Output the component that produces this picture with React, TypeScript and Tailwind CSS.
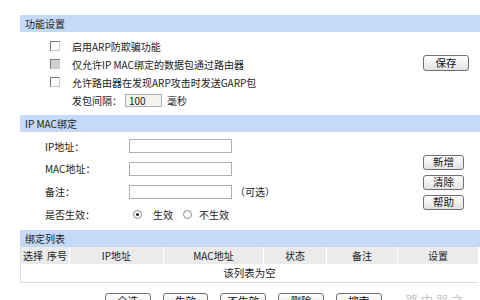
import React from 'react';

const font = "font-['SimSun','Noto_Sans_CJK_SC',sans-serif]";

const Btn = ({ label, w = 'w-[46px]', h = 'h-[16px]' }: { label: string; w?: string; h?: string }) => (
  <div
    className={`${w} ${h} flex items-center justify-center rounded-[3px] border border-[#707070] bg-linear-to-b from-white to-[#e2e2e2] text-[10.5px] leading-none text-[#111]`}
  >
    {label}
  </div>
);

const Check = ({ disabled = false }: { disabled?: boolean }) => (
  <span
    className={`block w-[10px] h-[10px] border border-t-[#7a7a7a] border-l-[#7a7a7a] border-b-[#c9c9c9] border-r-[#c9c9c9] ${disabled ? 'bg-[#cfcfcf]' : 'bg-white'}`}
  />
);

const Radio = ({ checked = false }: { checked?: boolean }) => (
  <span className="flex w-[9px] h-[9px] items-center justify-center rounded-full border border-[#8a8a8a] bg-white">
    {checked && <span className="block w-[3px] h-[3px] rounded-full bg-[#222]" />}
  </span>
);

const Bar = ({ title }: { title: string }) => (
  <div className="h-[17px] bg-[#c5daf8] pl-[5px] flex items-center leading-none text-[#222]">{title}</div>
);

const TextBox = () => <div className="w-[103px] h-[14px] border border-[#a9b0b8] bg-white" />;

export default function App() {
  const cols = [
    { label: '选择', w: 'w-[24px]' },
    { label: '序号', w: 'w-[24px]' },
    { label: 'IP地址', w: 'w-[94px]' },
    { label: 'MAC地址', w: 'w-[100px]' },
    { label: '状态', w: 'w-[63px]' },
    { label: '备注', w: 'w-[71px]' },
    { label: '设置', w: 'flex-1' },
  ];

  return (
    <div className={`w-[480px] h-[300px] overflow-hidden bg-white pl-[20px] pt-[15px] ${font} text-[10px] text-[#222]`}>
      {/* 功能设置 */}
      <Bar title="功能设置" />
      <div className="flex h-[83px]">
        <div className="pl-[30px] pt-[5px] flex flex-col">
          <div className="h-[18px] flex items-center gap-[12px]">
            <Check />
            <span>启用ARP防欺骗功能</span>
          </div>
          <div className="h-[18px] flex items-center gap-[12px]">
            <Check disabled />
            <span>仅允许IP MAC绑定的数据包通过路由器</span>
          </div>
          <div className="h-[18px] flex items-center gap-[12px]">
            <Check />
            <span>允许路由器在发现ARP攻击时发送GARP包</span>
          </div>
          <div className="h-[19px] flex items-center pl-[22px]">
            <span className="w-[53px]">发包间隔：</span>
            <div className="w-[37px] h-[13px] border border-[#a9b0b8] bg-[#f4f3ee] pl-[3px] flex items-center leading-none">
              100
            </div>
            <span className="ml-[5px]">毫秒</span>
          </div>
        </div>
        <div className="ml-auto pt-[23px] pr-[11px]">
          <Btn label="保存" />
        </div>
      </div>

      {/* IP MAC绑定 */}
      <Bar title="IP MAC绑定" />
      <div className="flex h-[98px]">
        <div className="pl-[25px] pt-[7px] flex flex-col">
          <div className="h-[23px] flex items-start">
            <span className="w-[84px] h-[14px] flex items-center">IP地址：</span>
            <TextBox />
          </div>
          <div className="h-[23px] flex items-start">
            <span className="w-[84px] h-[14px] flex items-center">MAC地址：</span>
            <TextBox />
          </div>
          <div className="h-[23px] flex items-start">
            <span className="w-[84px] h-[14px] flex items-center">备注：</span>
            <TextBox />
            <span className="h-[14px] flex items-center ml-[3px]">（可选）</span>
          </div>
          <div className="h-[23px] flex items-start">
            <span className="w-[84px] h-[14px] flex items-center">是否生效：</span>
            <div className="h-[14px] flex items-center pl-[4px]">
              <Radio checked />
              <span className="ml-[11px]">生效</span>
              <span className="ml-[10px]">
                <Radio />
              </span>
              <span className="ml-[7px]">不生效</span>
            </div>
          </div>
        </div>
        <div className="ml-auto pt-[23px] pr-[16px] flex flex-col gap-[5px]">
          <Btn label="新增" w="w-[41px]" h="h-[15px]" />
          <Btn label="清除" w="w-[41px]" h="h-[15px]" />
          <Btn label="帮助" w="w-[41px]" h="h-[15px]" />
        </div>
      </div>

      {/* 绑定列表 */}
      <Bar title="绑定列表" />
      <div className="w-[458px] border-l border-[#e2e2e2]">
        <div className="flex h-[17px] bg-[#ebebeb]">
          {cols.map((c, i) => (
            <div
              key={c.label}
              className={`${c.w} flex items-center justify-center leading-none ${i > 1 ? 'border-l border-white' : ''}`}
            >
              {c.label}
            </div>
          ))}
        </div>
        <div className="h-[19px] flex items-center justify-center border-b border-[#dcdcdc] bg-white text-[10.5px]">
          该列表为空
        </div>
      </div>
      <div className="mt-[10px] flex items-start pl-[85px] gap-[12px]">
        <Btn label="全选" />
        <Btn label="生效" />
        <Btn label="不生效" />
        <Btn label="删除" />
        <Btn label="搜索" />
        <span className="ml-[12px] text-[13px] leading-none text-[#c8c8c8] tracking-[2px]">路由器之家</span>
      </div>
    </div>
  );
}
